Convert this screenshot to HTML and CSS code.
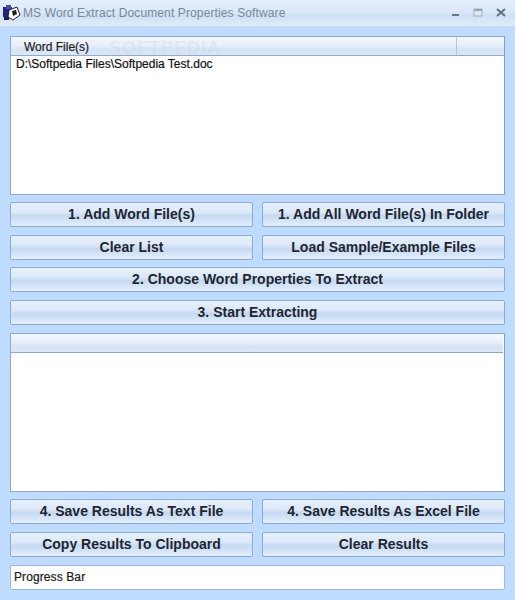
FILE: index.html
```html
<!DOCTYPE html>
<html lang="en">
<head>
<meta charset="utf-8">
<title>MS Word Extract Document Properties Software</title>
<link rel="stylesheet" href="styles.css">
</head>
<body>
<div class="window">
  <header class="titlebar">
    <svg class="appicon" width="18" height="18" viewBox="0 0 18 18">
      <rect x="0" y="3" width="9" height="10" fill="#23237a"/>
      <rect x="3" y="1" width="5" height="4" fill="#4a4ab0"/>
      <path d="M6 6 L14 3 L17 11 L10 16 L5 13 Z" fill="#fff" stroke="#222" stroke-width="1"/>
      <path d="M9 7 L13 6 L14 10 L10 12 Z" fill="#222"/>
      <rect x="1" y="13" width="5" height="3" fill="#1c1c55"/>
    </svg>
    <span class="title">MS Word Extract Document Properties Software</span>
    <div class="winctrls">
      <svg width="9" height="9" viewBox="0 0 9 9"><rect x="1" y="6" width="7" height="2" fill="#66788f"/></svg>
      <svg width="10" height="9" viewBox="0 0 10 9"><rect x="1" y="1" width="8" height="7" fill="#dfe8f3" stroke="#a5b2c2"/><rect x="1" y="1" width="8" height="2" fill="#98a6b8"/></svg>
      <svg width="10" height="9" viewBox="0 0 10 9"><path d="M1 1 L9 8 M9 1 L1 8" stroke="#5d7088" stroke-width="2"/></svg>
    </div>
  </header>
  <main class="content">
    <section class="listbox">
      <div class="listhead">
        <span class="col-name">Word File(s)</span>
        <span class="col-rest"></span>
      </div>
      <div class="listitem">D:\Softpedia Files\Softpedia Test.doc</div>
      <span class="watermark">SOFTPEDIA</span>
    </section>
    <div class="btnrow mt7">
      <button class="btn">1. Add Word File(s)</button>
      <button class="btn">1. Add All Word File(s) In Folder</button>
    </div>
    <div class="btnrow mt8">
      <button class="btn">Clear List</button>
      <button class="btn">Load Sample/Example Files</button>
    </div>
    <button class="btn mt7">2. Choose Word Properties To Extract</button>
    <button class="btn mt8">3. Start Extracting</button>
    <section class="listbox mt8">
      <div class="listhead trimmed"></div>
    </section>
    <div class="btnrow mt7">
      <button class="btn">4. Save Results As Text File</button>
      <button class="btn">4. Save Results As Excel File</button>
    </div>
    <div class="btnrow mt8">
      <button class="btn">Copy Results To Clipboard</button>
      <button class="btn">Clear Results</button>
    </div>
    <div class="progress mt8">Progress Bar</div>
  </main>
</div>
</body>
</html>
```
FILE: styles.css
```css
* { box-sizing: border-box; }
html, body { margin: 0; padding: 0; }
body { width: 515px; height: 600px; overflow: hidden; background: #bfdbff; font-family: "Liberation Sans", Arial, sans-serif; }
.window { width: 515px; height: 600px; display: flex; flex-direction: column; background: #bfdbff; }
.titlebar { height: 27px; flex: none; display: flex; align-items: center; padding: 0 9px 0 3px; background: linear-gradient(#e4effb 0, #dbe8f8 45%, #cfe0f5 60%, #e0ecfa 100%); border-bottom: 1px solid #c4d8f0; }
.appicon { flex: none; margin-right: 2px; }
.title { flex: 1; font-size: 12px; color: #78879a; letter-spacing: .12px; white-space: nowrap; }
.winctrls { display: flex; align-items: center; gap: 13px; margin-top: -2px; }
.content { flex: 1; display: flex; flex-direction: column; padding: 9px 10px 10px; }
.mt7 { margin-top: 7px; }
.mt8 { margin-top: 8px; }
.listbox { position: relative; height: 159px; background: #fff; border: 1px solid #8eaacb; border-right-color: #7f9dc2; }
.listhead { height: 19px; display: flex; background: linear-gradient(#f3f7fd 0, #e9f0fa 45%, #d5e3f5 70%, #dbe7f7 100%); border-bottom: 1px solid #8eaacb; }
.trimmed { margin-right: 1px; }
.col-name { width: 446px; padding-left: 13px; font-size: 12px; line-height: 20px; color: #1c1c1c; border-right: 1px solid #b3c6de; -webkit-text-stroke: .2px #1c1c1c; }
.col-rest { flex: 1; }
.listitem { font-size: 12px; line-height: 14px; padding: 1px 0 0 5px; color: #111; -webkit-text-stroke: .2px #111; }
.watermark { position: absolute; left: 98px; top: 1px; font-size: 18px; font-weight: 700; letter-spacing: 1px; color: rgba(190,205,225,.25); pointer-events: none; }
.btnrow { display: flex; justify-content: space-between; }
.btnrow .btn { width: 243px; }
.btn { display: block; width: 100%; height: 25px; padding: 0 0 2px; border: 1px solid #8dacd1; border-radius: 2px; background: linear-gradient(#e6f0fc 0, #dce8f8 40%, #c5d9f2 55%, #d6e5f8 80%, #e3eefc 100%); font-family: inherit; font-size: 14px; font-weight: 700; color: #1f2530; text-align: center; }
.progress { height: 25px; background: #fff; border: 1px solid #9db7d8; border-radius: 2px; font-size: 12px; line-height: 23px; padding-left: 3px; color: #1a1a1a; letter-spacing: .1px; -webkit-text-stroke: .2px #1a1a1a; }
```
